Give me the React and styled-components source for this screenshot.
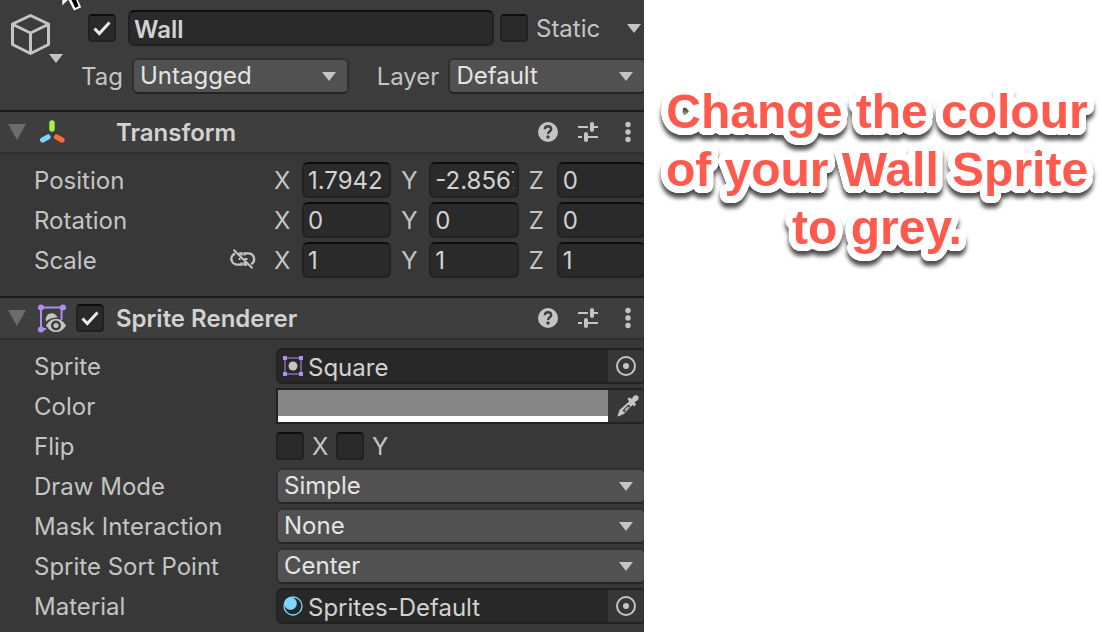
import React from 'react';
import styled, { createGlobalStyle } from 'styled-components';

const GlobalStyle = createGlobalStyle`
  *, *::before, *::after { box-sizing: border-box; }
  html, body, #root { min-height: 100vh; }
  body {
    margin: 0;
    background: #ffffff;
    font-family: Inter, "Liberation Sans", sans-serif;
    font-size: 24px;
    line-height: 32px;
    color: #c4c4c4;
  }
  button, input, select { font: inherit; color: inherit; margin: 0; }
`;

const Page = styled.main`
  display: grid;
  grid-template-columns: minmax(0, 644fr) minmax(0, 458fr);
  min-height: 100vh;
`;

const Inspector = styled.section`
  position: relative;
  background: #383838;
  overflow: hidden;
`;

const Cursor = styled.svg`
  position: absolute;
  top: 0;
  left: 60px;
`;

const ObjectHeader = styled.header`
  display: flex;
  height: 110px;
  padding-top: 10px;
  background: #3c3c3c;
`;

const ObjectIcon = styled.button`
  position: relative;
  flex: 0 0 80px;
  height: 56px;
  padding: 0;
  border: 0;
  background: none;
  svg { position: absolute; }
  svg:first-child { left: 10px; top: 3px; }
  svg:last-child { left: 49px; top: 44px; }
`;

const HeaderRows = styled.div`
  flex: 1;
  min-width: 0;
  display: flex;
  flex-direction: column;
  gap: 12px;
`;

const NameRow = styled.div`
  display: flex;
  align-items: center;
  padding: 0 3px 0 8px;
`;

const StaticBox = styled.div`
  display: flex;
  align-items: center;
  padding-left: 6px;
`;

/* The pop-up fields run on under the panel's right edge. */
const TagRow = styled.div`
  display: flex;
  align-items: center;
  margin-right: -2px;
`;

const TagLabel = styled.label`
  flex: 0 0 ${(p) => p.$width}px;
  padding: 2px 9px 0 0;
  text-align: right;
`;

const StaticLabel = styled.label`
  flex: 0 0 99px;
  padding: 2px 0 0 8px;
`;

const IconButton = styled.button`
  display: flex;
  align-items: center;
  justify-content: center;
  flex: none;
  width: ${(p) => p.$width || 20}px;
  height: 32px;
  padding: 0;
  border: 0;
  background: none;
  color: #c4c4c4;
`;

const TextInput = styled.input`
  flex: 1;
  width: 100%;
  min-width: 0;
  height: 36px;
  padding: ${(p) => (p.$strong ? 2 : 0)}px 3px 0 4px;
  border: 2px solid #212121;
  border-top-color: #0d0d0d;
  border-radius: 6px;
  background: #2a2a2a;
  color: #d2d2d2;
  font-weight: ${(p) => (p.$strong ? 600 : 400)};
  outline: none;
`;

const CheckWrap = styled.span`
  display: grid;
  flex: none;
  width: 28px;
  height: 28px;
  margin-right: ${(p) => p.$after || 0}px;
  > * { grid-area: 1 / 1; }
  svg { pointer-events: none; }
`;

const CheckInput = styled.input`
  appearance: none;
  width: 28px;
  height: 28px;
  border: 2px solid #212121;
  border-top-color: #0d0d0d;
  border-radius: 4px;
  background: #2a2a2a;
`;

const SelectWrap = styled.span`
  position: relative;
  display: flex;
  flex: ${(p) => p.$grow || 1} 1 0;
  min-width: 0;
  svg { position: absolute; right: 13px; top: 14px; pointer-events: none; }
`;

const SelectInput = styled.select`
  appearance: none;
  width: 100%;
  height: 36px;
  padding: 0 32px 2px 6px;
  border: 2px solid #303030;
  border-bottom-color: #242424;
  border-radius: 6px;
  background: #515151;
  color: #e4e4e4;
`;

const SectionHeader = styled.header`
  display: flex;
  align-items: center;
  height: 44px;
  padding: 0 6px 0 8px;
  border-top: 2px solid #1a1a1a;
  border-bottom: 2px solid #303030;
  background: #3e3e3e;
`;

const SectionIcon = styled.span`
  display: flex;
  flex: 0 0 ${(p) => p.$width}px;
`;

const SectionTitle = styled.h2`
  flex: 1;
  margin: 0;
  padding-top: 2px;
  font-size: 24px;
  line-height: 32px;
  font-weight: 600;
  color: #d2d2d2;
`;

const Tools = styled.div`
  display: flex;
  gap: 20px;
`;

const SectionBody = styled.div`
  display: flex;
  flex-direction: column;
  gap: 4px;
  margin-right: -2px;
  padding: 8px 0 ${(p) => p.$bottom}px 34px;
`;

const Row = styled.div`
  display: flex;
  align-items: center;
  height: 36px;
`;

const RowLabel = styled.label`
  display: flex;
  justify-content: space-between;
  flex: 0 0 ${(p) => p.$width || 242}px;
  padding: 2px 18px 0 0;
  white-space: nowrap;
`;

const LinkButton = styled(IconButton)`
  width: 26px;
  height: 28px;
`;

const Axes = styled.div`
  flex: 1;
  display: grid;
  grid-template-columns: repeat(3, minmax(0, 1fr));
  gap: 10px;
`;

const Axis = styled.label`
  display: flex;
  align-items: center;
  min-width: 0;
`;

const AxisName = styled.span`
  flex: 0 0 28px;
  padding-top: 2px;
`;

const ObjectField = styled.div`
  flex: 1;
  display: flex;
  height: 36px;
  border: 2px solid #212121;
  border-radius: ${(p) => (p.$square ? '0 6px 6px 0' : '6px')};
  background: #282828;
  overflow: hidden;
`;

const ObjectValue = styled.span`
  flex: 1;
  display: flex;
  align-items: center;
  gap: 5px;
  padding-left: 5px;
  color: #d2d2d2;
`;

const ObjectName = styled.span`
  padding-top: 3px;
`;

const PickerButton = styled(IconButton)`
  width: 36px;
  padding-left: ${(p) => p.$shift || 0}px;
  background: #373737;
`;

const Swatch = styled.button`
  flex: 1;
  padding: 0;
  border: 0;
  border-bottom: 6px solid #ffffff;
  background: #868686;
`;

const FlipLabel = styled.label`
  display: flex;
  align-items: center;
  gap: 8px;
  width: 60px;
`;

const FlipName = styled.span`
  padding-top: 2px;
`;

const Note = styled.aside`
  padding: 83px 0 0 8px;
`;

/* A rounded white outline, made of shadows set on a circle round the text. */
const outline = Array.from({ length: 40 }, (_, i) => {
  const angle = (i / 40) * Math.PI * 2;
  return `${(Math.cos(angle) * 7).toFixed(2)}px ${(Math.sin(angle) * 7).toFixed(2)}px 0 #ffffff`;
}).join(', ');

const NoteText = styled.p`
  margin: 0;
  font-family: "Liberation Sans", Arial, sans-serif;
  font-size: 48px;
  line-height: 58px;
  font-weight: 700;
  text-align: center;
  color: #ff5a4d;
  text-shadow: ${outline};
  filter: drop-shadow(0 5px 2px rgba(0, 0, 0, 0.7));
`;

const Triangle = () => (
  <svg width="14" height="9" viewBox="0 0 14 9" fill="#c4c4c4">
    <path d="M0 0h14L7 9z" />
  </svg>
);

const Foldout = () => (
  <svg width="18" height="16" viewBox="0 0 18 16" fill="#6c6c6c">
    <path d="M0 0h18L9 16z" />
  </svg>
);

const CubeIcon = () => (
  <svg width="41" height="43" viewBox="0 0 41 43" fill="none" stroke="#c4c4c4" strokeWidth="3" strokeLinejoin="round">
    <path d="M20.500 2.500 38.500 11v20.500L20.500 40.500 2.500 31.500V11zM3 11.500l17.500 8.500L38 11.500M20.500 20v20" />
  </svg>
);

const TransformIcon = () => (
  <svg width="28" height="24" viewBox="0 0 28 24" strokeLinecap="round">
    <path d="M14 3l0 6" stroke="#a6f24c" strokeWidth="5.400" />
    <path d="M4.600 20l5.400-3" stroke="#7fd6fd" strokeWidth="5.200" />
    <path d="M18.600 17l5.400 3" stroke="#ff6b3d" strokeWidth="5.200" />
  </svg>
);

const SpriteRendererIcon = () => (
  <svg width="30" height="30" viewBox="0 0 30 30">
    <path d="M5 26V4.500h20.500V17M5 26h5" fill="none" stroke="#b18cf2" strokeWidth="2" />
    <g fill="#b18cf2">
      <circle cx="5" cy="4.500" r="3" />
      <circle cx="27" cy="4.500" r="3" />
      <circle cx="5" cy="26.500" r="3" />
    </g>
    <path d="M10 18a6 6 0 1 1 11.500-3.500c-5 0-8.500 1.500-11.500 4z" fill="#c4c4c4" />
    <path d="M10 22.500c3-4.600 6-6.500 10-6.500s7 1.900 10 6.500c-3 4.600-6 6.500-10 6.500s-7-1.900-10-6.500z" fill="#c4c4c4" />
    <circle cx="20" cy="22.500" r="5" fill="#3e3e3e" />
    <circle cx="20" cy="22.500" r="2.500" fill="#c4c4c4" />
  </svg>
);

const CheckIcon = () => (
  <svg width="28" height="28" viewBox="0 0 28 28" fill="none" stroke="#ebebeb" strokeWidth="3">
    <path d="M6.500 14.500l4.800 5L21.500 8.500" />
  </svg>
);

const HelpIcon = () => (
  <svg width="20" height="20" viewBox="0 0 20 20">
    <circle cx="10" cy="10" r="10" fill="#c4c4c4" />
    <path d="M6.800 7.300C6.900 5.200 8.200 4.200 10 4.200c1.900 0 3.200 1.100 3.200 2.700 0 2.500-3.200 2.600-3.200 5" fill="none" stroke="#3e3e3e" strokeWidth="2.400" />
    <circle cx="10" cy="15" r="1.700" fill="#3e3e3e" />
  </svg>
);

const PresetIcon = () => (
  <svg width="20" height="20" viewBox="0 0 20 20" stroke="#c4c4c4" fill="none">
    <path d="M0 5h10M16 5h4M0 15h4M9 15h11" strokeWidth="2" />
    <path d="M14 2v6M8 12v6" strokeWidth="4" strokeLinecap="round" />
  </svg>
);

const MoreIcon = () => (
  <svg width="6" height="22" viewBox="0 0 6 22" fill="#c4c4c4">
    <circle cx="3" cy="3.500" r="2.700" />
    <circle cx="3" cy="11" r="2.700" />
    <circle cx="3" cy="18.500" r="2.700" />
  </svg>
);

const UnlinkIcon = () => (
  <svg width="26" height="20" viewBox="0 0 26 20" fill="none" stroke="#c4c4c4" strokeWidth="2.400">
    <path d="M5 4.600a5.700 5.700 0 0 0 2.300 11H11.500v-2M9 4.400h2.500v2M14.500 6.500V4.400h4a5.700 5.700 0 0 1 2.600 10.700M14.500 13v2.600h2.500" />
    <path d="M8.500 10h2M14.500 10h3" strokeWidth="2" />
    <path d="M3.500 .8l19 18.400" strokeWidth="2" />
  </svg>
);

const SpriteIcon = () => (
  <svg width="20" height="20" viewBox="0 0 20 20">
    <path d="M2 2h16v16H2z" fill="none" stroke="#b18cf2" />
    <path d="M0 0h4v4H0zM16 0h4v4h-4zM0 16h4v4H0zM16 16h4v4h-4z" fill="#b18cf2" />
    <circle cx="10" cy="10" r="4.500" fill="#c4c4c4" />
  </svg>
);

const MaterialIcon = () => (
  <svg width="20" height="20" viewBox="0 0 20 20">
    <circle cx="10" cy="10" r="9" fill="none" stroke="#7fd6fd" strokeWidth="1.300" />
    <circle cx="7.500" cy="7.500" r="6.300" fill="#7fd6fd" />
  </svg>
);

const TargetIcon = () => (
  <svg width="20" height="20" viewBox="0 0 20 20">
    <circle cx="10" cy="10" r="9" fill="none" stroke="#c4c4c4" strokeWidth="2" />
    <circle cx="10" cy="10" r="3" fill="#c4c4c4" />
  </svg>
);

const DropperIcon = () => (
  <svg width="22" height="22" viewBox="0 0 22 22">
    <path d="M10.500 3.500l2-1 2.500 1.500 1.500-3C18 0 20 0 21 1s1 3-.5 4.500l-3 1.500L19 9l-1.500 2.500L15.500 10l-8.500 9L1 21.500.5 21 2.500 15l9.500-8.500z" fill="#c4c4c4" />
    <path d="M5.500 15.500l6-6 2 2-6 6z" fill="#373737" />
    <path d="M8 15.500l3.500-3.500" stroke="#c4c4c4" strokeWidth="1.500" />
  </svg>
);

const CursorIcon = () => (
  <Cursor width="22" height="11" viewBox="0 0 22 11" aria-hidden="true">
    <path d="M2.300 0v5.500L7.800 0zM8.500 0l5.500 10.500 7.200-3.300L17.800 0z" fill="#fff" />
    <path d="M5 0h11.200l2.500 6.300-3.500 1.700L11.500 0z" fill="#000" />
  </Cursor>
);

function Check({ after, ...rest }) {
  return (
    <CheckWrap $after={after}>
      <CheckInput type="checkbox" {...rest} />
      {rest.defaultChecked && <CheckIcon />}
    </CheckWrap>
  );
}

function Select({ id, value, grow }) {
  return (
    <SelectWrap $grow={grow}>
      <SelectInput id={id} defaultValue={value}>
        <option>{value}</option>
      </SelectInput>
      <Triangle />
    </SelectWrap>
  );
}

function SectionTools() {
  return (
    <Tools>
      <IconButton aria-label="Help"><HelpIcon /></IconButton>
      <IconButton aria-label="Presets"><PresetIcon /></IconButton>
      <IconButton aria-label="More options"><MoreIcon /></IconButton>
    </Tools>
  );
}

const vectors = [
  { name: 'Position', values: ['1.7942', '-2.8567', '0'] },
  { name: 'Rotation', values: ['0', '0', '0'] },
  { name: 'Scale', values: ['1', '1', '1'], unlinked: true },
];

function VectorRow({ name, values, unlinked }) {
  return (
    <Row role="group" aria-label={name}>
      <RowLabel as="span" $width={240}>
        {name}
        {unlinked && <LinkButton aria-label="Constrain proportions"><UnlinkIcon /></LinkButton>}
      </RowLabel>
      <Axes>
        {['X', 'Y', 'Z'].map((axis, i) => (
          <Axis key={axis}>
            <AxisName>{axis}</AxisName>
            <TextInput defaultValue={values[i]} />
          </Axis>
        ))}
      </Axes>
    </Row>
  );
}

function SelectRow({ id, name, value }) {
  return (
    <Row>
      <RowLabel htmlFor={id}>{name}</RowLabel>
      <Select id={id} value={value} />
    </Row>
  );
}

function ObjectRow({ name, value, icon }) {
  return (
    <Row>
      <RowLabel as="span">{name}</RowLabel>
      <ObjectField>
        <ObjectValue>{icon}<ObjectName>{value}</ObjectName></ObjectValue>
        <PickerButton aria-label={`Select ${name}`}><TargetIcon /></PickerButton>
      </ObjectField>
    </Row>
  );
}

export default function App() {
  return (
    <Page>
      <GlobalStyle />
      <Inspector>
        <CursorIcon />
        <ObjectHeader>
          <ObjectIcon aria-label="Object icon"><CubeIcon /><Triangle /></ObjectIcon>
          <HeaderRows>
            <NameRow>
              <Check after={12} defaultChecked aria-label="Active" />
              <TextInput $strong defaultValue="Wall" aria-label="Name" />
              <StaticBox>
                <Check id="static" />
                <StaticLabel htmlFor="static">Static</StaticLabel>
                <IconButton $width={14} aria-label="Static options"><Triangle /></IconButton>
              </StaticBox>
            </NameRow>
            <TagRow>
              <TagLabel $width={52} htmlFor="tag">Tag</TagLabel>
              <Select id="tag" value="Untagged" grow={11} />
              <TagLabel $width={99} htmlFor="layer">Layer</TagLabel>
              <Select id="layer" value="Default" grow={10} />
            </TagRow>
          </HeaderRows>
        </ObjectHeader>

        <SectionHeader>
          <SectionIcon $width={30}><Foldout /></SectionIcon>
          <SectionIcon $width={78}><TransformIcon /></SectionIcon>
          <SectionTitle>Transform</SectionTitle>
          <SectionTools />
        </SectionHeader>
        <SectionBody $bottom={18}>
          {vectors.map((v) => <VectorRow key={v.name} {...v} />)}
        </SectionBody>

        <SectionHeader>
          <SectionIcon $width={28}><Foldout /></SectionIcon>
          <SectionIcon $width={40}><SpriteRendererIcon /></SectionIcon>
          <Check after={12} defaultChecked aria-label="Enable Sprite Renderer" />
          <SectionTitle>Sprite Renderer</SectionTitle>
          <SectionTools />
        </SectionHeader>
        <SectionBody $bottom={8}>
          <ObjectRow name="Sprite" value="Square" icon={<SpriteIcon />} />
          <Row>
            <RowLabel as="span">Color</RowLabel>
            <ObjectField $square>
              <Swatch aria-label="Color" />
              <PickerButton $shift={4} aria-label="Pick color"><DropperIcon /></PickerButton>
            </ObjectField>
          </Row>
          <Row>
            <RowLabel as="span">Flip</RowLabel>
            <FlipLabel><Check /><FlipName>X</FlipName></FlipLabel>
            <FlipLabel><Check /><FlipName>Y</FlipName></FlipLabel>
          </Row>
          <SelectRow id="draw" name="Draw Mode" value="Simple" />
          <SelectRow id="mask" name="Mask Interaction" value="None" />
          <SelectRow id="sort" name="Sprite Sort Point" value="Center" />
          <ObjectRow name="Material" value="Sprites-Default" icon={<MaterialIcon />} />
        </SectionBody>
      </Inspector>
      <Note>
        <NoteText>Change the colour of your Wall Sprite to grey.</NoteText>
      </Note>
    </Page>
  );
}
